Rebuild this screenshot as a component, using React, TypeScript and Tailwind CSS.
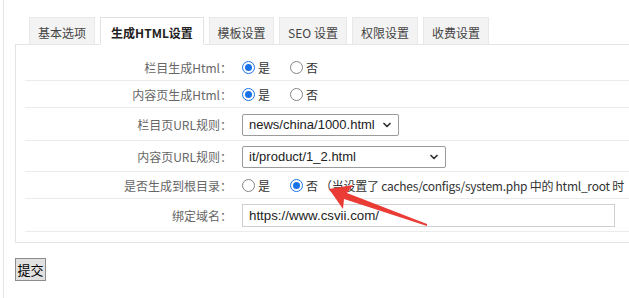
import React from 'react';
import { ChevronDown } from 'lucide-react';

const cjk = "font-['Microsoft_YaHei','Noto_Sans_CJK_SC',sans-serif]";
const latin = "font-['Liberation_Sans','Noto_Sans_CJK_SC',sans-serif]";

const tabs = [
  { label: '基本选项', w: 'w-[66px]' },
  { label: '生成HTML设置', w: 'w-[104px]', active: true },
  { label: '模板设置', w: 'w-[65px]' },
  { label: 'SEO 设置', w: 'w-[68px]' },
  { label: '权限设置', w: 'w-[66px]' },
  { label: '收费设置', w: 'w-[66px]' }
];

function Radio({ checked }: { checked?: boolean }) {
  if (checked) {
    return <span className="w-[13px] h-[13px] rounded-full border-[1.5px] border-[#1a73e8] bg-white flex items-center justify-center shrink-0">
        <span className="w-[7px] h-[7px] rounded-full bg-[#1a73e8]" />
      </span>;
  }
  return <span className="w-[13px] h-[13px] rounded-full border border-[#858585] bg-white shrink-0" />;
}

function YesNo({ yes }: { yes: boolean }) {
  return <div className="flex items-center text-[12px] text-[#333]">
      <label className="flex items-center gap-[3px]">
        <Radio checked={yes} />
        <span>是</span>
      </label>
      <label className="flex items-center gap-[3px] ml-[20px]">
        <Radio checked={!yes} />
        <span>否</span>
      </label>
    </div>;
}

function Select({ value, width }: { value: string; width: string }) {
  return <div className={`${width} h-[22px] border border-[#9b9b9b] rounded-[2px] bg-white flex items-center justify-between pl-[6px] pr-[5px] ${latin} text-[13px] text-[#222]`}>
      <span>{value}</span>
      <ChevronDown size={12} strokeWidth={3.5} className="text-[#333]" />
    </div>;
}

function Row({ label, h, children }: { label: string; h: string; children: React.ReactNode }) {
  return <div className={`${h} flex items-center border-b border-[#ebebeb]`}>
      <div className="w-[207px] text-right text-[12px] text-[#666] pt-[2px]">{label}</div>
      <div className="pl-[10px] flex items-center pt-[1px]">{children}</div>
    </div>;
}

export default function App() {
  return <div className={`relative w-[629px] h-[298px] overflow-hidden bg-white ${cjk}`}>
      <div className="ml-[3px] h-full border-l border-[#e4e4e4] pl-[11px] pt-[17px]">
        <div className="flex items-end gap-[5px] pl-[14px] relative z-10">
          {tabs.map(t => <div key={t.label} className={`${t.w} h-[28px] -mb-px flex items-center justify-center pt-[4px] text-[12px] border ${t.active ? 'bg-white border-[#e2e2e2] border-b-white font-bold text-[#222]' : 'bg-[#f3f3f3] border-[#e8e8e8] text-[#444]'}`}>
              {t.label}
            </div>)}
        </div>
        <div className="w-[640px] border border-[#e4e4e4] pt-[9px] pb-[10px] pl-[9px]">
          <Row label="栏目生成Html：" h="h-[27px]">
            <YesNo yes />
          </Row>
          <Row label="内容页生成Html：" h="h-[27px]">
            <YesNo yes />
          </Row>
          <Row label="栏目页URL规则：" h="h-[33px]">
            <Select value="news/china/1000.html" width="w-[157px]" />
          </Row>
          <Row label="内容页URL规则：" h="h-[31px]">
            <Select value="it/product/1_2.html" width="w-[204px]" />
          </Row>
          <Row label="是否生成到根目录：" h="h-[27px]">
            <YesNo yes={false} />
            <span className="ml-[2px] text-[12px] text-[#333] whitespace-nowrap tracking-[-0.25px]">（当设置了 caches/configs/system.php 中的 html_root 时</span>
          </Row>
          <Row label="绑定域名：" h="h-[33px]">
            <div className={`w-[373px] h-[23px] border border-[#cfcfcf] bg-white flex items-center pl-[6px] ${latin} text-[13.3px] text-[#222]`}>
              https://www.csvii.com/
            </div>
          </Row>
        </div>
        <button className="mt-[15px] w-[31px] h-[23px] bg-[#e1e1e1] border border-[#8c8c8c] text-[13px] text-black flex items-center justify-center">
          提交
        </button>
      </div>
      <svg className="absolute left-0 top-0 pointer-events-none" width="629" height="298" viewBox="0 0 629 298">
        <polygon points="329,189 353,185 347,193 427,224 427,226 344,199 343,209" fill="#ea3c35" />
      </svg>
    </div>;
}
